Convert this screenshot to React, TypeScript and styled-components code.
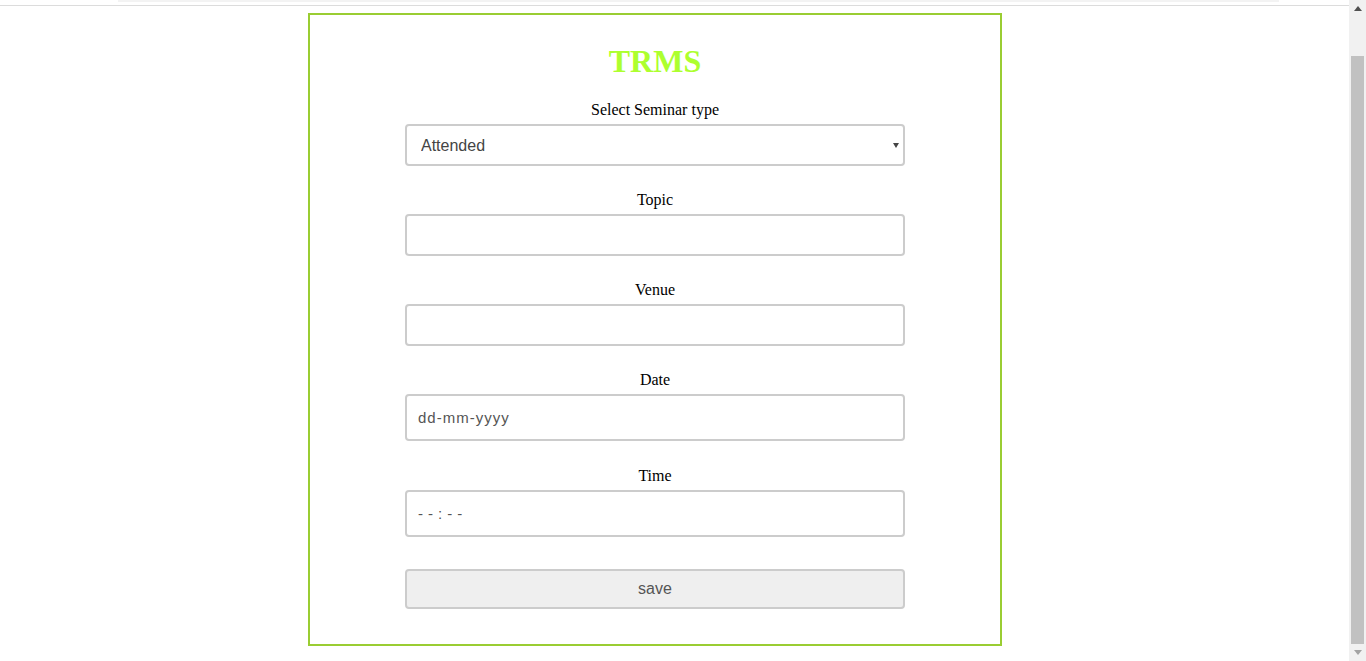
import { useLayoutEffect, useRef } from "react";
import styled, { createGlobalStyle } from "styled-components";

const GlobalStyle = createGlobalStyle`
  html, body {
    margin: 0;
    padding: 0;
    background: #fff;
    overflow: hidden;
  }
  body {
    font-family: "Liberation Serif", serif;
  }
`;

const Window = styled.div`
  display: flex;
  height: 100vh;
`;

const Viewport = styled.div`
  flex: 1;
  overflow: hidden;
`;

// barre de defilement a droite (dessinee a la main)
const ScrollBar = styled.div`
  width: 17px;
  background: #f1f1f1;
  display: flex;
  flex-direction: column;
`;

const ScrollButton = styled.div`
  height: 17px;
  display: flex;
  align-items: center;
  justify-content: center;
`;

const ScrollTrack = styled.div`
  flex: 1;
  display: flex;
  flex-direction: column;
  padding-top: 39px;
`;

const ScrollThumb = styled.div`
  flex: 1;
  margin: 0 2px;
  background: #c1c1c1;
`;

// barre du haut (on n'en voit que le bas)
const Header = styled.header`
  height: 47px;
  border-bottom: 1px solid #dcdcdc;
  display: flex;
  align-items: flex-end;
`;

const HeaderStrip = styled.div`
  margin: 0 0 3px 118px;
  width: 1161px;
  height: 2px;
  background: #f3f3f3;
`;

const Page = styled.main`
  padding: 7px 0 15px 308px;
`;

const Card = styled.form`
  width: 690px;
  border: 2px solid #9acd32;
  padding: 28px 0 35px;
  display: flex;
  flex-direction: column;
  align-items: center;
`;

const Title = styled.h1`
  margin: 0 0 21px;
  font-family: "Liberation Serif", serif;
  font-size: 32px;
  line-height: 37px;
  font-weight: bold;
  color: #adff2f;
`;

const Field = styled.div<{ $gap?: number }>`
  width: 500px;
  display: flex;
  flex-direction: column;
  align-items: center;
  margin-top: ${(p) => p.$gap ?? 25}px;
`;

const Label = styled.label`
  font-family: "Liberation Serif", serif;
  font-size: 16px;
  line-height: 18px;
  color: #000;
  margin-bottom: 5px;
`;

const SelectWrap = styled.div`
  position: relative;
  width: 100%;

  &::after {
    content: "";
    position: absolute;
    right: 6px;
    top: 19px;
    border-left: 3px solid transparent;
    border-right: 3px solid transparent;
    border-top: 5px solid #444;
  }
`;

const Select = styled.select`
  appearance: none;
  width: 100%;
  height: 42px;
  box-sizing: border-box;
  border: 2px solid #ccc;
  border-radius: 4px;
  background: #fff;
  padding: 0 14px;
  font-family: "Liberation Sans", Arial, sans-serif;
  font-size: 16px;
  color: #444;
  outline: none;
`;

const Input = styled.input<{ $tall?: boolean; $spacing?: number }>`
  width: 100%;
  height: ${(p) => (p.$tall ? "47px" : "42px")};
  box-sizing: border-box;
  border: 2px solid #ccc;
  border-radius: 4px;
  background: #fff;
  padding: 0 11px;
  font-family: "Liberation Sans", Arial, sans-serif;
  font-size: 15px;
  color: #444;
  outline: none;
  letter-spacing: ${(p) => p.$spacing ?? 0}px;

  &::placeholder {
    color: #555;
  }
`;

const SaveButton = styled.button`
  margin-top: 32px;
  width: 500px;
  height: 40px;
  border: 2px solid #ccc;
  border-radius: 4px;
  background: #efefef;
  font-family: "Liberation Sans", Arial, sans-serif;
  font-size: 16px;
  color: #555;
  cursor: pointer;
`;

function Arrow({ up, color }: { up?: boolean; color: string }) {
  return (
    <svg width="8" height="5" viewBox="0 0 8 5">
      <path d={up ? "M0 5h8L4 0z" : "M0 0h8L4 5z"} fill={color} />
    </svg>
  );
}

export default function App() {
  const view = useRef<HTMLDivElement>(null);

  useLayoutEffect(() => {
    if (view.current) view.current.scrollTop = 42;
  }, []);

  return (
    <>
      <GlobalStyle />
      <Window>
        <Viewport ref={view}>
          <Header>
            <HeaderStrip />
          </Header>
          <Page>
            <Card onSubmit={(e) => e.preventDefault()}>
              <Title>TRMS</Title>
              <Field $gap={0}>
                <Label>Select Seminar type</Label>
                <SelectWrap>
                  <Select defaultValue="Attended">
                    <option>Attended</option>
                    <option>Conducted</option>
                  </Select>
                </SelectWrap>
              </Field>
              <Field>
                <Label>Topic</Label>
                <Input type="text" />
              </Field>
              <Field>
                <Label>Venue</Label>
                <Input type="text" />
              </Field>
              <Field>
                <Label>Date</Label>
                <Input type="text" $tall $spacing={1} placeholder="dd-mm-yyyy" />
              </Field>
              <Field $gap={26}>
                <Label>Time</Label>
                <Input type="text" $tall $spacing={5} placeholder="--:--" />
              </Field>
              <SaveButton type="submit">save</SaveButton>
            </Card>
          </Page>
        </Viewport>
        <ScrollBar>
          <ScrollButton>
            <Arrow up color="#505050" />
          </ScrollButton>
          <ScrollTrack>
            <ScrollThumb />
          </ScrollTrack>
          <ScrollButton>
            <Arrow color="#a3a3a3" />
          </ScrollButton>
        </ScrollBar>
      </Window>
    </>
  );
}
